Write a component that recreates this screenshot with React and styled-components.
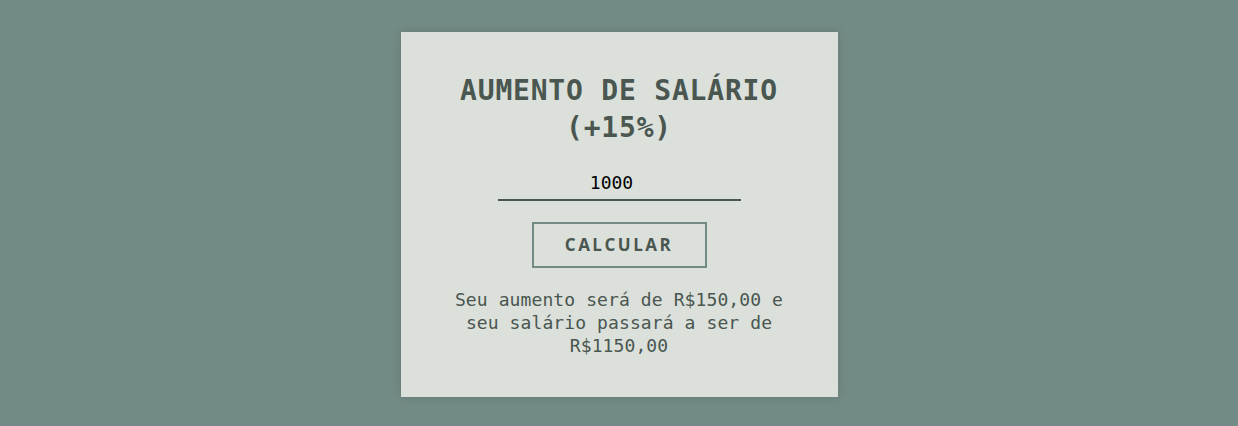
import React, { useState } from "react";
import styled, { createGlobalStyle } from "styled-components";

const GlobalStyle = createGlobalStyle`
  html, body {
    margin: 0;
    padding: 0;
    background: #738b86;
  }
  * {
    box-sizing: border-box;
  }
`;

const App = () => {
  const [salary, setSalary] = useState("1000");
  const [result, setResult] = useState({ raise: 150, total: 1150 });

  const calculate = () => {
    const value = parseFloat(salary) || 0;
    const raise = value * 0.15;
    setResult({ raise, total: value + raise });
  };

  const money = (n) => `R$${n.toFixed(2).replace(".", ",")}`;

  return (
    <>
      <GlobalStyle />
      <Page>
        <Card>
          <Title>AUMENTO DE SALÁRIO (+15%)</Title>
          <SalaryInput
            type="number"
            value={salary}
            onChange={(e) => setSalary(e.target.value)}
          />
          <CalcButton onClick={calculate}>CALCULAR</CalcButton>
          <Result>
            {`Seu aumento será de ${money(result.raise)} e seu salário passará a ser de ${money(result.total)}`}
          </Result>
        </Card>
      </Page>
    </>
  );
};

export default App;

const Page = styled.div`
  display: flex;
  justify-content: center;
  padding-top: 32px;
  min-height: 426px;
`;

const Card = styled.div`
  display: flex;
  flex-direction: column;
  align-items: center;
  width: 437px;
  height: 365px;
  padding: 40px 50px;
  background: #dbe0da;
  box-shadow: 0 0 10px rgba(0, 0, 0, 0.15);
  color: #4a5650;
  font-family: "DejaVu Sans Mono", monospace;
`;

const Title = styled.h1`
  margin: 0;
  font-size: 28px;
  font-weight: bold;
  line-height: 37px;
  letter-spacing: 0.8px;
  text-align: center;
`;

const SalaryInput = styled.input`
  width: 243px;
  height: 35px;
  margin-top: 20px;
  padding: 0;
  border: none;
  border-bottom: 2px solid #4a5650;
  background: transparent;
  outline: none;
  color: #000;
  font-family: "DejaVu Sans Mono", monospace;
  font-size: 18px;
  text-align: center;
`;

const CalcButton = styled.button`
  width: 175px;
  height: 47px;
  margin-top: 21px;
  background: transparent;
  border: 2px solid #738b86;
  color: #4a5650;
  font-family: "Open Sans", sans-serif;
  font-weight: 700;
  font-size: 17px;
  letter-spacing: 2.5px;
  cursor: pointer;
`;

const Result = styled.p`
  margin: 20px 0 0;
  font-size: 18px;
  letter-spacing: 0.1px;
  line-height: 23px;
  text-align: center;
`;
